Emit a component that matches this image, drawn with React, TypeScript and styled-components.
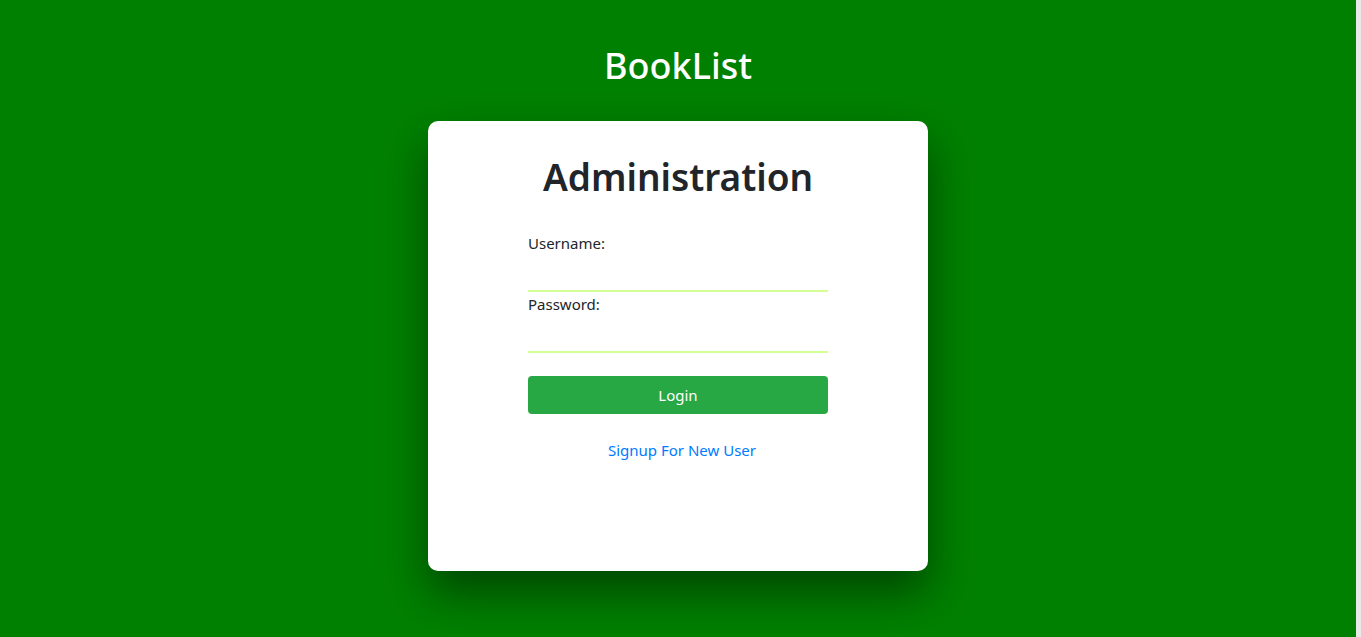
import React from 'react'
import styled, { createGlobalStyle } from 'styled-components'

const Global = createGlobalStyle`
  html, body {
    margin: 0;
    padding: 0;
    background: #e9e9e9;
    height: 100%;
  }
  body {
    font-family: "Noto Sans", "Open Sans", sans-serif;
    color: #212529;
  }
  #root { height: 100%; }
`

const Page = styled.div`
  width: calc(100% - 5px);
  height: 100%;
  background: #008000;
  display: flex;
  flex-direction: column;
  align-items: center;
  overflow: hidden;
`

const Brand = styled.h1`
  margin: 42px 0 31px;
  font-size: 36px;
  line-height: 48px;
  font-weight: 500;
  color: #fff;
`

const Card = styled.div`
  width: 500px;
  height: 450px;
  box-sizing: border-box;
  background: #fff;
  border-radius: 10px;
  padding-top: 32px;
  box-shadow: 0 22px 45px rgba(0, 0, 0, 0.45);
  display: flex;
  flex-direction: column;
  align-items: center;
`

const Title = styled.h2`
  margin: 0 0 30px;
  font-size: 37px;
  line-height: 48px;
  font-weight: 600;
  color: #212529;
`

const Form = styled.form`
  width: 300px;
  display: flex;
  flex-direction: column;
`

const Label = styled.label`
  font-size: 15px;
  line-height: 24px;
  color: #212529;
`

const Input = styled.input`
  height: 37px;
  box-sizing: border-box;
  border: none;
  border-bottom: 2px solid #d4ff94;
  outline: none;
  font-size: 16px;
  background: transparent;
`

const Button = styled.button`
  margin-top: 23px;
  height: 38px;
  border: none;
  border-radius: 4px;
  background: #28a745;
  color: #fff;
  font-family: inherit;
  font-size: 15px;
`

const Link = styled.a`
  margin-top: 24px;
  margin-left: 8px;
  font-size: 15px;
  line-height: 24px;
  color: #007bff;
  text-decoration: none;
  align-self: center;
`

const App = () => {
  return <>
    <Global />
    <Page>
      <Brand>BookList</Brand>
      <Card>
        <Title>Administration</Title>
        <Form onSubmit={e => e.preventDefault()}>
          <Label>Username:</Label>
          <Input type='text' />
          <Label>Password:</Label>
          <Input type='password' />
          <Button type='submit'>Login</Button>
          <Link href='#'>Signup For New User</Link>
        </Form>
      </Card>
    </Page>
  </>
}

export default App
